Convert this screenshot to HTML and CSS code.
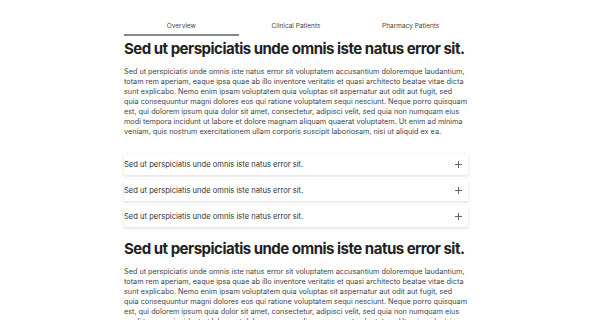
FILE: index.html
```html
<!DOCTYPE html>
<html lang="en">
<head>
    <meta charset="UTF-8">
    <title>Overview</title>
    <link rel="stylesheet" href="styles.css">
</head>
<body>
<div class="page">
    <div class="tabs">
        <div class="tab active">Overview</div>
        <div class="tab">Clinical Patients</div>
        <div class="tab">Pharmacy Patients</div>
    </div>

    <h1 class="title">Sed ut perspiciatis unde omnis iste natus error sit.</h1>
    <p class="text">Sed ut perspiciatis unde omnis iste natus error sit voluptatem accusantium doloremque laudantium, totam rem aperiam, eaque ipsa quae ab illo inventore veritatis et quasi architecto beatae vitae dicta sunt explicabo. Nemo enim ipsam voluptatem quia voluptas sit aspernatur aut odit aut fugit, sed quia consequuntur magni dolores eos qui ratione voluptatem sequi nesciunt. Neque porro quisquam est, qui dolorem ipsum quia dolor sit amet, consectetur, adipisci velit, sed quia non numquam eius modi tempora incidunt ut labore et dolore magnam aliquam quaerat voluptatem. Ut enim ad minima veniam, quis nostrum exercitationem ullam corporis suscipit laboriosam, nisi ut aliquid ex ea.</p>

    <div class="accordion">
        <div class="acc-item">
            <span>Sed ut perspiciatis unde omnis iste natus error sit.</span>
            <span class="plus"></span>
        </div>
        <div class="acc-item">
            <span>Sed ut perspiciatis unde omnis iste natus error sit.</span>
            <span class="plus"></span>
        </div>
        <div class="acc-item">
            <span>Sed ut perspiciatis unde omnis iste natus error sit.</span>
            <span class="plus"></span>
        </div>
    </div>

    <h1 class="title">Sed ut perspiciatis unde omnis iste natus error sit.</h1>
    <p class="text">Sed ut perspiciatis unde omnis iste natus error sit voluptatem accusantium doloremque laudantium, totam rem aperiam, eaque ipsa quae ab illo inventore veritatis et quasi architecto beatae vitae dicta sunt explicabo. Nemo enim ipsam voluptatem quia voluptas sit aspernatur aut odit aut fugit, sed quia consequuntur magni dolores eos qui ratione voluptatem sequi nesciunt. Neque porro quisquam est, qui dolorem ipsum quia dolor sit amet, consectetur, adipisci velit, sed quia non numquam eius modi tempora incidunt ut labore et dolore magnam aliquam quaerat voluptatem. Ut enim ad minima veniam, quis nostrum exercitationem ullam corporis suscipit laboriosam, nisi ut aliquid ex ea.</p>
</div>
</body>
</html>
```

FILE: styles.css
```css
*{margin: 0; padding: 0; box-sizing: border-box;}
body{
    background: #fff;
    font-family: Inter, "Noto Sans", sans-serif;
    color: #222;
}
.page{
    width: 344px;
    margin: 0 auto;
    padding-top: 19px;
}
.tabs{
    display: flex;
}
.tab{
    flex: 1;
    text-align: center;
    font-size: 6.5px;
    color: #444;
    line-height: 10px;
    padding-top: 2px;
    padding-bottom: 3px;
    border-bottom: 2px solid transparent;
}
.tab.active{
    border-bottom-color: #888;
}
.title{
    font-size: 15px;
    font-weight: 700;
    color: #222;
    letter-spacing: -0.5px;
    line-height: 22px;
    margin-top: 2px;
    white-space: nowrap;
}
.text{
    font-size: 7.28px;
    line-height: 10px;
    color: #444;
    margin-top: 7px;
}
.accordion{
    display: flex;
    flex-direction: column;
    gap: 5px;
    margin-top: 17px;
    margin-bottom: 11px;
}
.acc-item{
    display: flex;
    align-items: center;
    justify-content: space-between;
    height: 21px;
    font-size: 7.6px;
    color: #333;
    background: #fff;
    box-shadow: 0 1px 3px rgba(0,0,0,0.15);
    padding-right: 6px;
}
.plus{
    position: relative;
    width: 7px;
    height: 7px;
}
/*用两条线拼出加号*/
.plus:before, .plus:after{
    content: "";
    position: absolute;
    background: #666;
}
.plus:before{
    left: 0;
    top: 3px;
    width: 7px;
    height: 1px;
}
.plus:after{
    left: 3px;
    top: 0;
    width: 1px;
    height: 7px;
}
```
